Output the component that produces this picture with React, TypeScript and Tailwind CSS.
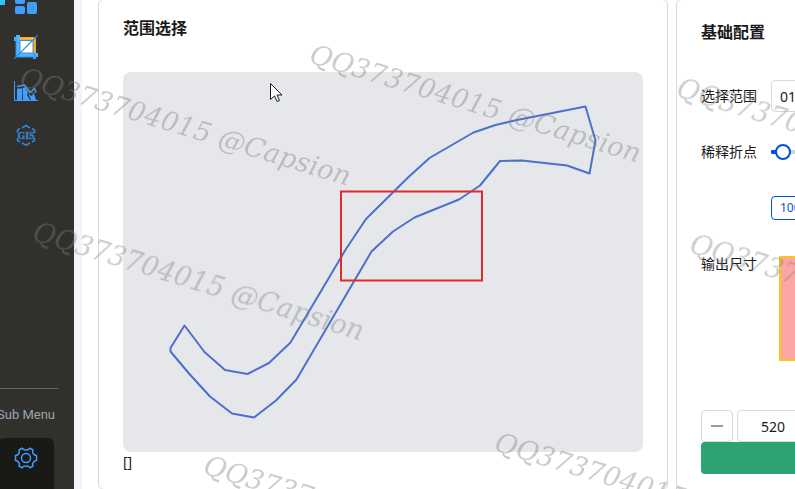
import { type ReactNode } from 'react'

const watermarks = [
  { x: 18, y: 85 },
  { x: 308, y: 62 },
  { x: 31, y: 240 },
  { x: 202, y: 473 },
  { x: 493, y: 450 },
  { x: 675, y: 96 },
  { x: 688, y: 252 },
]

function GridIcon() {
  return (
    <svg viewBox="0 0 24 24" className="size-6" fill="#409eff">
      <rect x="1" y="1" width="10" height="12" rx="2" />
      <rect x="13" y="1" width="10" height="8" rx="2" />
      <rect x="1" y="15" width="10" height="8" rx="2" />
      <rect x="13" y="11" width="10" height="12" rx="2" />
    </svg>
  )
}

function CropIcon() {
  return (
    <svg viewBox="0 0 24 24" className="size-6" fill="none">
      <path d="M6 6h13v12H6z" fill="#fff" />
      <path d="M6 3.500h14.500V18" stroke="#f5a623" strokeWidth="3" />
      <path d="M6 3.500h13" stroke="#ffd591" strokeDasharray="1 1" />
      <path d="M0 4h2M4 0v20h20" stroke="#55b4ff" strokeWidth="4" />
      <path d="M6 6v12h13M2 2v20h20M6 5.500h13V18" stroke="#2f93ef" />
      <path d="M0 24 24 0" stroke="#2389e8" strokeWidth="1.200" />
      <path d="M20.500 18v6" stroke="#409eff" strokeWidth="3" />
    </svg>
  )
}

function ChartIcon() {
  return (
    <svg viewBox="0 0 24 24" className="size-6" fill="none">
      <path d="M.5 2v19.500H24" stroke="#409eff" />
      <path d="M3 9.500h5v11.500H3zM8.500 9 11 8l3 5-1 3 3 5H9zM14 14l3 3 3-2.500 2 6.500H17z" fill="#409eff" />
      <path d="M3 7.500 10.500 6 16 13.500l4.500-4 1.500 4" stroke="#409eff" strokeWidth="1.500" />
    </svg>
  )
}

function GisIcon() {
  return (
    <svg viewBox="0 0 24 24" className="size-6" fill="none">
      <path d="m8 5 4-2.500L16 5M18 5.500l2.500 1.500V10M20.500 15v2.500L18 19M16 20l-4 2.200L8 20M6 19l-2.500-1.500V15M3.500 10V7L6 5.500" stroke="#3585d5" strokeWidth="1.500" />
      <text x="12" y="16" textAnchor="middle" fontSize="10" fontWeight="700" fontFamily="Liberation Serif, serif" fill="#3585d5" stroke="#3585d5" strokeWidth="0.300">GIS</text>
    </svg>
  )
}

function GearIcon() {
  return (
    <svg viewBox="0 0 24 24" className="size-6" fill="none" stroke="#409eff" strokeWidth="1.500" strokeLinejoin="round">
      <path d="M8 2.200q1 1.800 4 1.800t4-1.800l3 1.800q-1 2 .3 3.700T22.500 9.500v5q-2 .2-3.200 1.800T19 20l-3 1.800q-1-1.800-4-1.800t-4 1.800L5 20q1-2-.3-3.700T1.500 14.500v-5q2-.2 3.200-1.800T5 4z" />
      <circle cx="12" cy="12" r="4.500" />
    </svg>
  )
}

function NavItem({ label, children }: { label: string; children: ReactNode }) {
  return (
    <button type="button" aria-label={label} className="flex h-11 w-14 items-center justify-center">
      {children}
    </button>
  )
}

function Sidebar() {
  return (
    <nav className="relative -ml-[22px] flex h-full w-24 shrink-0 flex-col items-center bg-[#32302d]">
      <span className="absolute top-0 left-[22px] h-[5px] w-[5px] bg-[#29c5ff]" />
      <div className="-mt-[19px] flex flex-col">
        <NavItem label="Dashboard"><GridIcon /></NavItem>
        <NavItem label="Crop"><CropIcon /></NavItem>
        <NavItem label="Charts"><ChartIcon /></NavItem>
        <NavItem label="Map"><GisIcon /></NavItem>
      </div>
      <div className="mt-auto flex flex-col items-center">
        <hr className="w-16 border-[#66645f]" />
        <p className="mt-4 mb-[13px] font-[Roboto,sans-serif] text-[13px] leading-5 text-[#9ca3af]">Sub Menu</p>
        <button type="button" aria-label="Settings" className="-mb-[5px] flex h-14 w-14 justify-center rounded-md bg-[#191916] pt-2">
          <GearIcon />
        </button>
      </div>
    </nav>
  )
}

function RangeCard() {
  return (
    <section className="flex w-[570px] shrink-0 flex-col rounded-md border border-[#d9d9d9] px-6 pt-4">
      <h2 className="text-base leading-6 font-bold">范围选择</h2>
      <svg viewBox="0 0 520 380" className="mt-8 w-full rounded-lg bg-[#e5e7eb]" fill="none">
        <path
          d="M462.500 34.500 472.500 68.500 466.500 101.500 444 93.500 399 88.500 377 89 357 113.500 336 127.500 291.500 145.500 270 159.500 248.500 179.500 173.500 307.500 153 328.500 131 345.500 109 341.500 87 324.500 66 301.500 47.500 279.500V276L61.500 253.500 81.500 280 102 298 124.500 302 146 291 167.500 270.500 223 177 243 147 285 105.500 306.500 86 328 73.500 350.500 60.500 372.500 53 394 48z"
          stroke="#4e70cc"
          strokeWidth="2"
          strokeLinejoin="round"
        />
        <rect x="218" y="119.500" width="141" height="89" stroke="#e12a2a" strokeWidth="2" />
      </svg>
      <p className="text-sm leading-5">[]</p>
    </section>
  )
}

function ConfigCard() {
  return (
    <section className="w-[400px] shrink-0 rounded-md border border-[#d9d9d9] px-6 pt-5">
      <h2 className="text-base leading-6 font-bold">基础配置</h2>
      <div className="mt-9 flex h-8 items-center">
        <label htmlFor="range" className="w-[70px] text-sm">选择范围</label>
        <input id="range" defaultValue="01" className="h-8 w-60 rounded-sm border border-[#d9d9d9] px-2 text-sm" />
      </div>
      <div className="mt-6 flex h-8 items-center">
        <label htmlFor="simplify" className="w-[70px] text-sm">稀释折点</label>
        <input
          id="simplify"
          type="range"
          defaultValue="2"
          className="h-4 w-60 appearance-none rounded-full bg-[linear-gradient(to_right,#0052d9_12px,#d3d5da_12px)] bg-[length:100%_4px] bg-center bg-no-repeat [&::-webkit-slider-thumb]:size-4 [&::-webkit-slider-thumb]:appearance-none [&::-webkit-slider-thumb]:rounded-full [&::-webkit-slider-thumb]:border-2 [&::-webkit-slider-thumb]:border-[#0052d9] [&::-webkit-slider-thumb]:bg-white"
        />
      </div>
      <button type="button" className="mt-7 ml-[70px] block h-6 rounded-sm border border-[#0052d9] px-2 text-xs text-[#0052d9]">100%</button>
      <div className="mt-7 flex">
        <p className="w-[78px] text-sm leading-8">输出尺寸</p>
        <div className="mt-2 h-[105px] w-52 border-2 border-[#fbc520] bg-[#fca5a5]" />
      </div>
      <div className="mt-[49px] flex gap-1">
        <button type="button" aria-label="Decrease" className="flex size-8 items-center justify-center rounded-sm border border-[#d9d9d9]">
          <span className="h-0.5 w-3 bg-[#9b9b9b]" />
        </button>
        <input aria-label="Width" defaultValue="520" className="h-8 w-[72px] rounded-sm border border-[#d9d9d9] text-center text-sm" />
      </div>
      <button type="button" aria-label="Export" className="h-8 w-full rounded-sm bg-[#2ba471]" />
    </section>
  )
}

export default function App() {
  return (
    <div className="relative flex h-screen overflow-hidden bg-white font-['Noto_Sans','Noto_Sans_CJK_SC',sans-serif] text-[#1a1a1a]">
      <Sidebar />
      <div className="w-2 shrink-0 bg-[#f3f4f6]" />
      <main className="-my-px flex min-w-0 grow gap-2 pl-4">
        <RangeCard />
        <ConfigCard />
      </main>
      <svg className="pointer-events-none absolute inset-0 size-full" aria-hidden="true">
        <g fill="#808080" fillOpacity="0.4" fontFamily="DejaVu Serif, serif" fontSize="27" fontStyle="italic" className="blur-[0.5px]">
          {watermarks.map(({ x, y }) => (
            <text key={`${x}-${y}`} x={x} y={y} transform={`rotate(17 ${x} ${y})`}>QQ373704015 @Capsion</text>
          ))}
        </g>
        <path d="M270.500 83.500v16l4-3.500 2.500 5.500 2.500-1-2.500-5.500h5z" fill="#fff" stroke="#171b26" />
      </svg>
    </div>
  )
}
